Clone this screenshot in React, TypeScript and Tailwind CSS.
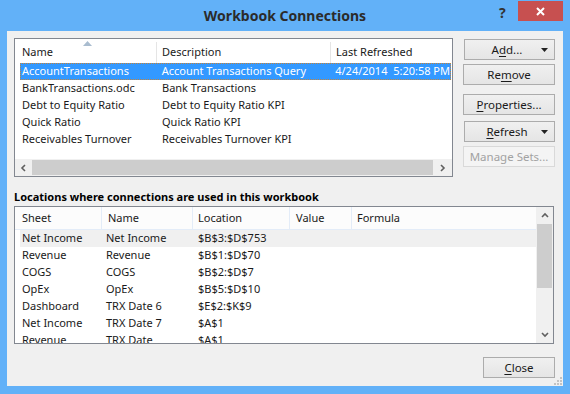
import React from "react";

const FONT = { fontFamily: '"Noto Sans", "Open Sans", sans-serif' };

const CONNECTIONS = [
  { name: "AccountTransactions", desc: "Account Transactions Query", refreshed: "4/24/2014  5:20:58 PM" },
  { name: "BankTransactions.odc", desc: "Bank Transactions", refreshed: "" },
  { name: "Debt to Equity Ratio", desc: "Debt to Equity Ratio KPI", refreshed: "" },
  { name: "Quick Ratio", desc: "Quick Ratio KPI", refreshed: "" },
  { name: "Receivables Turnover", desc: "Receivables Turnover KPI", refreshed: "" },
];

const LOCATIONS = [
  ["Net Income", "Net Income", "$B$3:$D$753"],
  ["Revenue", "Revenue", "$B$1:$D$70"],
  ["COGS", "COGS", "$B$2:$D$7"],
  ["OpEx", "OpEx", "$B$5:$D$10"],
  ["Dashboard", "TRX Date 6", "$E$2:$K$9"],
  ["Net Income", "TRX Date 7", "$A$1"],
  ["Revenue", "TRX Date", "$A$1"],
];

function Caret() {
  return (
    <svg width="7" height="4" viewBox="0 0 7 4" className="absolute right-[6px] top-[8px]">
      <path d="M0 0h7L3.5 4z" fill="#222" />
    </svg>
  );
}

function Btn({
  children,
  caret,
  disabled,
  className = "",
}: {
  children: React.ReactNode;
  caret?: boolean;
  disabled?: boolean;
  className?: string;
}) {
  return (
    <div
      className={
        "relative flex h-[21px] items-center justify-center border text-[11.5px] " +
        (disabled
          ? "border-[#d9d9d9] bg-[#f4f4f4] text-[#a2a2a2] "
          : "border-[#acacac] bg-gradient-to-b from-[#f0f0f0] to-[#e5e5e5] text-[#1a1a1a] ") +
        className
      }
    >
      <span className={caret ? "-ml-[4px]" : ""}>{children}</span>
      {caret && <Caret />}
    </div>
  );
}

function Chevron({ dir }: { dir: "left" | "right" | "up" | "down" }) {
  const d = {
    right: "M2 1l3 3-3 3",
    left: "M5 1L2 4l3 3",
    up: "M1 5l3-3 3 3",
    down: "M1 2l3 3 3-3",
  }[dir];
  return (
    <svg width="8" height="8" viewBox="0 0 8 8">
      <path d={d} fill="none" stroke="#606060" strokeWidth="1.6" />
    </svg>
  );
}

export default function App() {
  return (
    <div className="flex h-[394px] w-[570px] flex-col bg-[#62b1f8]" style={FONT}>
      {/* title bar */}
      <div className="relative flex h-[31px] items-center justify-center">
        <span className="-mt-[1px] text-[14px] font-bold text-[#2b2b2b]">Workbook Connections</span>
        <span className="absolute left-[499px] top-[2px] text-[14px] font-bold text-[#333]">?</span>
        <div className="absolute left-[518px] top-[1px] flex h-[20px] w-[45px] items-center justify-center bg-[#c75050]">
          <svg width="9" height="9" viewBox="0 0 9 9">
            <path d="M1 1l7 7M8 1L1 8" stroke="#fff" strokeWidth="2" />
          </svg>
        </div>
      </div>

      {/* client area */}
      <div className="relative mx-[7px] mb-[8px] flex flex-1 flex-col bg-[#f0f0f0] pl-[7px] pr-[8px] pt-[7px] text-[11px] text-[#1a1a1a]">
        <div className="flex">
          {/* connections list */}
          <div className="flex h-[139px] w-[439px] flex-col border border-[#828790] bg-white">
            <div className="relative flex h-[24px] items-center pt-[3px]">
              <svg width="9" height="5" viewBox="0 0 9 5" className="absolute left-[68px] top-[2px]">
                <path d="M0 5L4.5 0L9 5z" fill="#a9bccf" />
              </svg>
              <div className="w-[141px] pl-[7px]">Name</div>
              <div className="h-full w-px bg-[#e5e5e5]" />
              <div className="w-[173px] pl-[5px]">Description</div>
              <div className="h-full w-px bg-[#e5e5e5]" />
              <div className="pl-[5px]">Last Refreshed</div>
            </div>
            <div className="flex-1 pl-[5px] pr-px">
              {CONNECTIONS.map((c, i) => (
                <div
                  key={c.name}
                  className={
                    "flex h-[17px] items-center whitespace-nowrap " +
                    (i === 0 ? "border border-dotted border-[#c4833a] bg-[#3399ff] text-white" : "border border-transparent")
                  }
                >
                  <div className="w-[136px] pl-px">{c.name}</div>
                  <div className="w-[174px] pl-[5px]">{c.desc}</div>
                  <div className="whitespace-pre pl-[5px]">{c.refreshed}</div>
                </div>
              ))}
            </div>
            <div className="flex h-[17px] items-center bg-[#f0f0f0]">
              <div className="flex w-[17px] justify-center">
                <Chevron dir="left" />
              </div>
              <div className="h-[15px] flex-1 bg-[#cdcdcd]" />
              <div className="flex w-[19px] justify-center">
                <Chevron dir="right" />
              </div>
            </div>
          </div>

          {/* buttons */}
          <div className="ml-[10px] flex w-[92px] flex-col items-center">
            <Btn caret className="mt-px w-[91px]">
              A<u className="underline-offset-2">d</u>d...
            </Btn>
            <Btn className="mt-[4px] w-[92px] border-[#9a9a9a]">
              Re<u className="underline-offset-2">m</u>ove
            </Btn>
            <Btn className="mt-[9px] w-[92px]">
              <u className="underline-offset-2">P</u>roperties...
            </Btn>
            <Btn caret className="mt-[6px] w-[91px]">
              <u className="underline-offset-2">R</u>efresh
            </Btn>
            <Btn disabled className="mt-[4px] w-[92px]">
              Manage Sets...
            </Btn>
          </div>
        </div>

        <div className="mt-[11px] text-[11px] font-bold leading-[17px] text-black">
          Locations where connections are used in this workbook
        </div>

        {/* locations list */}
        <div className="mt-[1px] flex h-[138px] w-[540px] border border-[#828790] bg-white">
          <div className="flex flex-1 flex-col overflow-hidden">
            <div className="flex h-[23px] shrink-0 items-center border-b border-[#e3ecf8] bg-[#fcfcfc]">
              <div className="w-[86px] pl-[7px]">Sheet</div>
              <div className="h-full w-px bg-[#e3ecf8]" />
              <div className="w-[90px] pl-[6px]">Name</div>
              <div className="h-full w-px bg-[#e3ecf8]" />
              <div className="w-[96px] pl-[5px]">Location</div>
              <div className="h-full w-px bg-[#e3ecf8]" />
              <div className="w-[61px] pl-[6px]">Value</div>
              <div className="h-full w-px bg-[#e3ecf8]" />
              <div className="pl-[5px]">Formula</div>
            </div>
            <div className="pl-[5px]">
              {LOCATIONS.map((r, i) => (
                <div
                  key={i}
                  className={"flex h-[17px] shrink-0 items-center whitespace-nowrap " + (i === 0 ? "bg-[#f0f0f0]" : "")}
                >
                  <div className="w-[86px] pl-[2px]">{r[0]}</div>
                  <div className="w-[90px]">{r[1]}</div>
                  <div className="pl-[2px]">{r[2]}</div>
                </div>
              ))}
            </div>
          </div>
          <div className="flex w-[17px] flex-col bg-[#f0f0f0]">
            <div className="flex h-[17px] items-center justify-center">
              <Chevron dir="up" />
            </div>
            <div className="mx-px h-[64px] bg-[#cdcdcd]" />
            <div className="flex-1" />
            <div className="flex h-[17px] items-center justify-center">
              <Chevron dir="down" />
            </div>
          </div>
        </div>

        <div className="mt-[13px] flex justify-end">
          <Btn className="w-[72px]">
            <u className="underline-offset-2">C</u>lose
          </Btn>
        </div>

        <svg width="8" height="8" viewBox="0 0 8 8" className="absolute bottom-px right-px">
          <path d="M7 1v0M7 4v0M4 4v0M7 7v0M4 7v0M1 7v0" stroke="#a0a0a0" strokeWidth="1.5" strokeLinecap="square" />
        </svg>
      </div>
    </div>
  );
}
